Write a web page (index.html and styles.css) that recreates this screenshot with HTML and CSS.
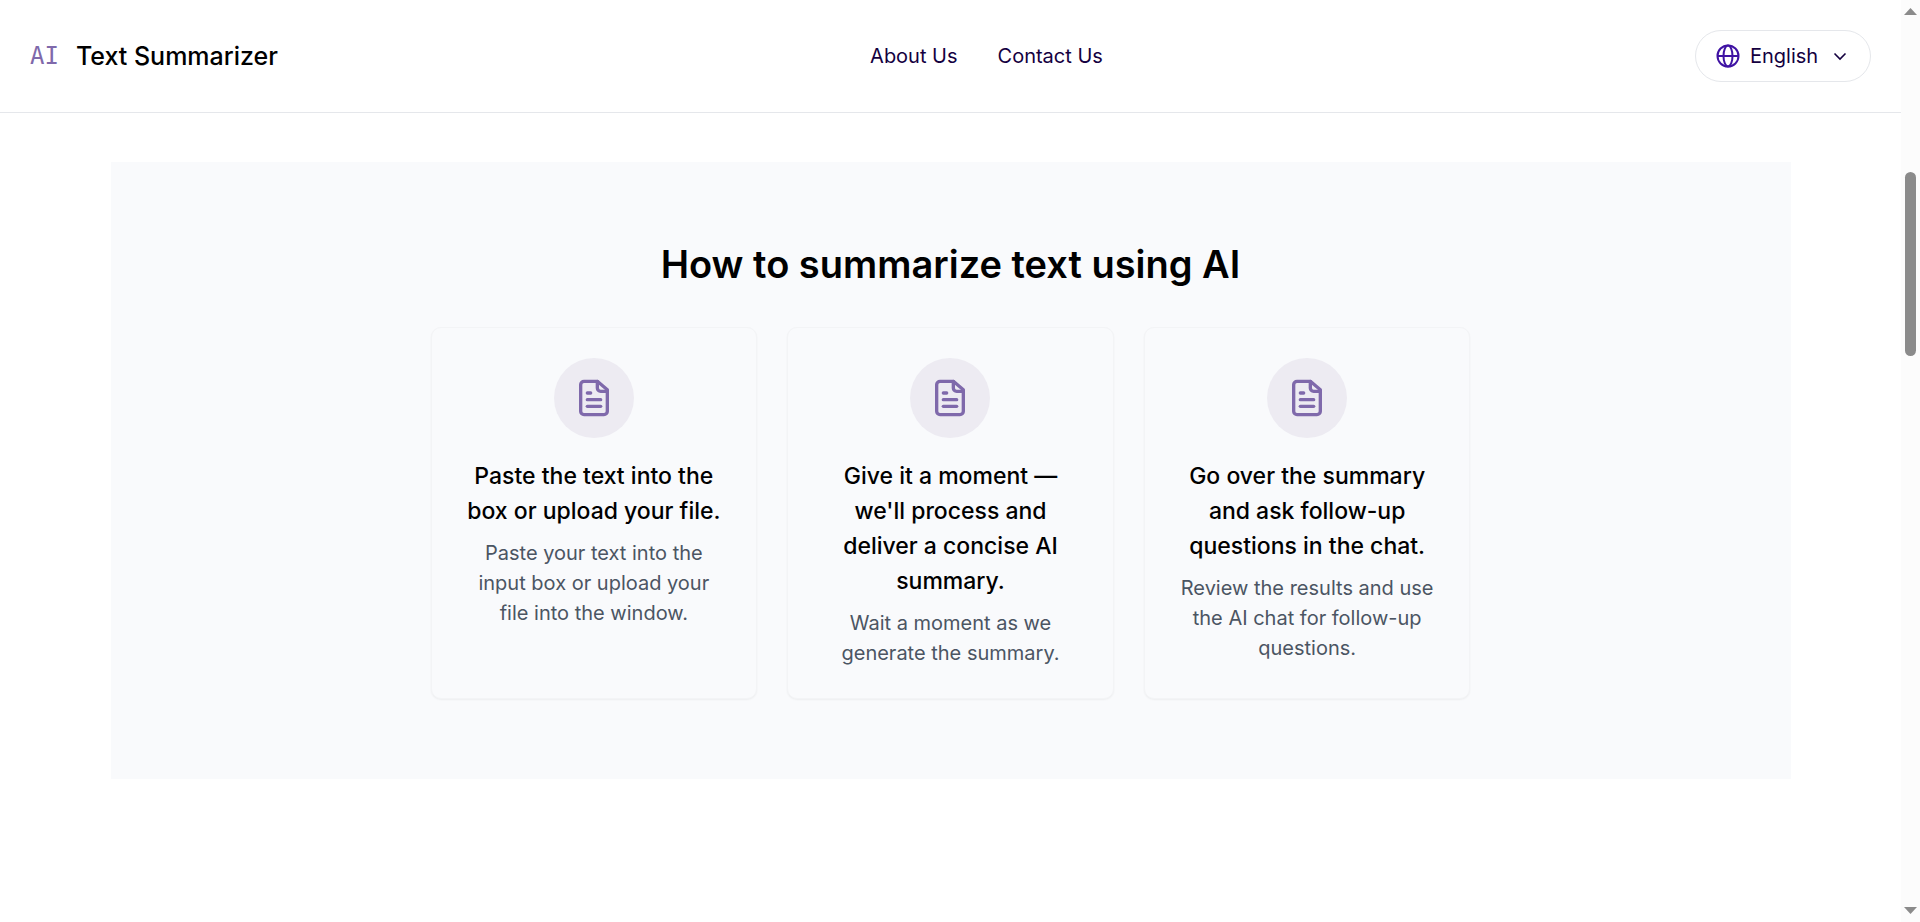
FILE: index.html
```html
<!DOCTYPE html>
<html lang="en">
<head>
  <meta charset="UTF-8">
  <meta name="viewport" content="width=device-width, initial-scale=1.0">
  <title>AI Text Summarizer</title>
  <link rel="stylesheet" href="styles.css">
</head>
<body>
  <svg class="sprite" aria-hidden="true">
    <symbol id="icon-file" viewBox="0 0 24 24">
      <path d="M14 2H6a2 2 0 0 0-2 2v16a2 2 0 0 0 2 2h12a2 2 0 0 0 2-2V7z"/>
      <path d="M14 2v4a2 2 0 0 0 2 2h4"/>
      <path d="M10 9H8"/>
      <path d="M16 13H8"/>
      <path d="M16 17H8"/>
    </symbol>
  </svg>

  <div class="page">
    <header class="header">
      <a class="logo" href="#">
        <span class="logo-mark">AI</span>
        <span class="logo-name">Text Summarizer</span>
      </a>
      <nav class="nav">
        <a href="#">About Us</a>
        <a href="#">Contact Us</a>
      </nav>
      <label class="language">
        <svg class="globe" viewBox="0 0 24 24" aria-hidden="true">
          <circle cx="12" cy="12" r="10.5"/>
          <ellipse cx="12" cy="12" rx="4.5" ry="10.5"/>
          <path d="M1.5 12h21"/>
        </svg>
        <select aria-label="Language">
          <option>English</option>
        </select>
        <svg class="chevron" viewBox="0 0 14 14" aria-hidden="true">
          <path d="M1.500 4.500L7 10l5.500-5.500"/>
        </svg>
      </label>
    </header>

    <main>
      <section class="steps">
        <h2>How to summarize text using AI</h2>
        <div class="cards">
          <div class="card">
            <div class="card-icon"><svg><use href="#icon-file"/></svg></div>
            <h3>Paste the text into the box or upload your file.</h3>
            <p>Paste your text into the input box or upload your file into the window.</p>
          </div>
          <div class="card">
            <div class="card-icon"><svg><use href="#icon-file"/></svg></div>
            <h3>Give it a moment — we'll process and deliver a concise AI summary.</h3>
            <p>Wait a moment as we generate the summary.</p>
          </div>
          <div class="card">
            <div class="card-icon"><svg><use href="#icon-file"/></svg></div>
            <h3>Go over the summary and ask follow-up questions in the chat.</h3>
            <p>Review the results and use the AI chat for follow-up questions.</p>
          </div>
        </div>
      </section>
    </main>
  </div>

  <div class="scrollbar" aria-hidden="true">
    <svg viewBox="0 0 13 7"><path d="M6.500 0L13 7H0z"/></svg>
    <div class="track"><div class="thumb"></div></div>
    <svg viewBox="0 0 13 7"><path d="M0 0h13L6.500 7z"/></svg>
  </div>
</body>
</html>
```
FILE: styles.css
```css
* { box-sizing: border-box; }
body { margin: 0; display: flex; background: #fff; color: #000; font-family: Inter, "Liberation Sans", sans-serif; font-size: 20px; line-height: 30px; }
h2, h3, p { margin: 0; }
a { color: inherit; text-decoration: none; }
.sprite { display: none; }
.page { flex: 1; min-width: 0; }

/* header */
.header { display: flex; justify-content: space-between; align-items: center; padding: 30px; border-bottom: 1px solid #e5e7eb; }
.logo { display: flex; align-items: center; gap: 17px; }
.logo-mark { font-family: "DejaVu Sans Mono", monospace; font-size: 24px; color: #7f69ab; }
.logo-name { font-size: 25px; font-weight: 500; }
.nav { display: flex; gap: 40px; color: #14003f; }
.language { display: flex; align-items: center; height: 52px; padding: 0 23px 0 20px; border: 1px solid #e5e7eb; border-radius: 26px; color: #14003f; }
.language select { appearance: none; border: none; background: none; padding: 0; margin: 0 14px 0 10px; font: inherit; color: inherit; cursor: pointer; }
.globe { width: 24px; height: 24px; fill: none; stroke: #3f12a3; stroke-width: 2; }
.chevron { width: 14px; height: 14px; fill: none; stroke: #14003f; stroke-width: 1.6; }

/* how to */
.steps { max-width: 1680px; margin: 49px auto; padding: 80px 20px; background: #f9fafc; text-align: center; }
.steps h2 { font-size: 38px; font-weight: 600; line-height: 45px; margin-bottom: 40px; }
.cards { display: grid; grid-template-columns: repeat(3, 1fr); gap: 30px; max-width: 1040px; margin: 0 auto; }
.card { padding: 30px; border: 1px solid #f3f4f6; border-radius: 10px; box-shadow: 0 1px 2px rgba(0,0,0,0.05); background: #f9fafc; }
.card-icon { display: flex; align-items: center; justify-content: center; width: 80px; height: 80px; margin: 0 auto 21px; border-radius: 50%; background: #edebf2; }
.card-icon svg { width: 40px; height: 40px; fill: none; stroke: #7f69ab; stroke-width: 2; stroke-linecap: round; stroke-linejoin: round; }
.card h3 { font-size: 23px; font-weight: 500; line-height: 35px; margin-bottom: 9px; }
.card p { color: #4b5563; }

/* scrollbar */
.scrollbar { position: sticky; top: 0; display: flex; flex-direction: column; align-items: center; width: 19px; height: 100vh; padding: 8px 0; background: #fcfcfc; }
.scrollbar svg { width: 13px; height: 7px; fill: #8b8b8b; }
.track { flex: 1; padding-top: 17vh; }
.thumb { width: 11px; height: 20vh; border-radius: 6px; background: #8b8b8b; }
```
